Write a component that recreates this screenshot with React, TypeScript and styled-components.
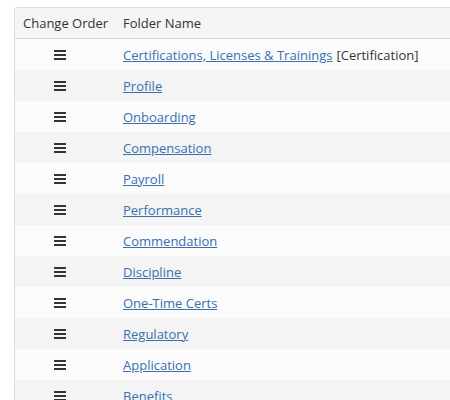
import React from 'react';
import styled, { createGlobalStyle } from 'styled-components';

const GlobalStyle = createGlobalStyle`
  body {
    margin: 0;
    background: #ffffff;
    font-family: "Open Sans", "Liberation Sans", sans-serif;
    font-size: 13px;
    color: #333333;
  }
`;

const folders = [
  { name: 'Certifications, Licenses & Trainings', tag: 'Certification' },
  { name: 'Profile' },
  { name: 'Onboarding' },
  { name: 'Compensation' },
  { name: 'Payroll' },
  { name: 'Performance' },
  { name: 'Commendation' },
  { name: 'Discipline' },
  { name: 'One-Time Certs' },
  { name: 'Regulatory' },
  { name: 'Application' },
  { name: 'Benefits' },
];

const Page = styled.div`
  padding: 7px 0 0 14px;
  height: 400px;
  overflow: hidden;
`;

const Table = styled.table`
  width: 100%;
  table-layout: fixed;
  border-collapse: separate;
  border-spacing: 0;
  border-top: 1px solid #dddddd;
  border-left: 1px solid #dddddd;
  border-top-left-radius: 4px;
  overflow: hidden;
`;

const OrderCol = styled.col`
  width: 100px;
`;

const HeadCell = styled.th`
  background: #f5f5f5;
  text-align: left;
  font-weight: 400;
  height: 30px;
  padding: 0 8px;
  border-bottom: 1px solid #d6d6d6;
  white-space: nowrap;
  overflow: visible;
`;

const Row = styled.tr<{ $odd: boolean }>`
  background: ${(p) => (p.$odd ? '#fbfbfb' : '#f4f4f4')};
`;

const Cell = styled.td`
  height: 31px;
  padding: 0 8px;
  white-space: nowrap;
`;

const HandleCell = styled(Cell)`
  padding-left: 39px;
`;

const Handle = styled.span`
  display: block;
  width: 12px;
  height: 10px;
  background: linear-gradient(
    #333 0 2px,
    transparent 2px 4px,
    #333 4px 6px,
    transparent 6px 8px,
    #333 8px 10px
  );
`;

const FolderLink = styled.a`
  color: #3a6fb0;
  text-decoration: underline;
  cursor: pointer;
`;

const Tag = styled.span`
  color: #333333;
  margin-left: 4px;
`;

export default function App() {
  return (
    <>
      <GlobalStyle />
      <Page>
        <Table>
          <colgroup>
            <OrderCol />
            <col />
          </colgroup>
          <thead>
            <tr>
              <HeadCell>Change Order</HeadCell>
              <HeadCell>Folder Name</HeadCell>
            </tr>
          </thead>
          <tbody>
            {folders.map((f, i) => (
              <Row key={f.name} $odd={i % 2 === 0}>
                <HandleCell>
                  <Handle />
                </HandleCell>
                <Cell>
                  <FolderLink>{f.name}</FolderLink>
                  {f.tag && <Tag>[{f.tag}]</Tag>}
                </Cell>
              </Row>
            ))}
          </tbody>
        </Table>
      </Page>
    </>
  );
}
